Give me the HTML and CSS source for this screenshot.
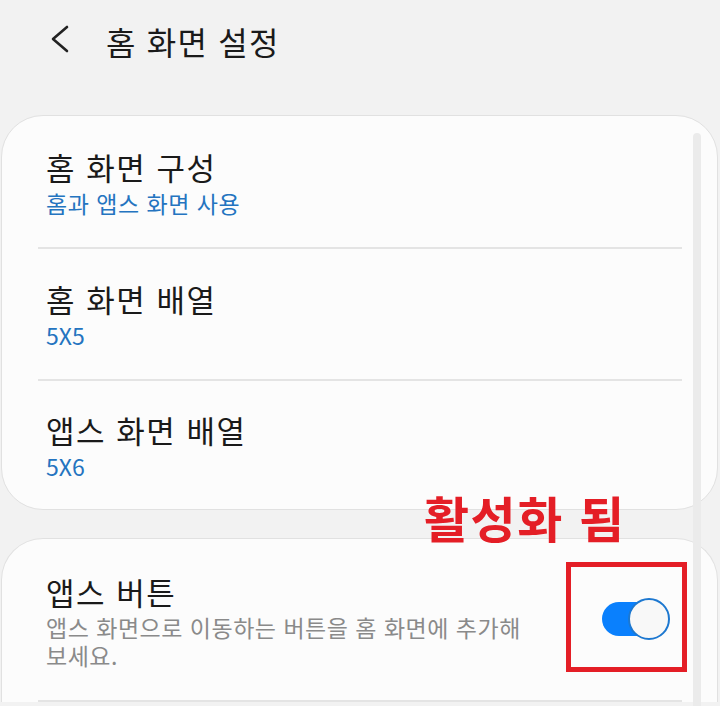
FILE: index.html
```html
<!DOCTYPE html>
<html lang="ko">
<head>
<meta charset="utf-8">
<link rel="stylesheet" href="styles.css">
</head>
<body>
<div class="screen">
  <header class="topbar">
    <svg class="back" width="20" height="30" viewBox="0 0 20 30"><path d="M17 2 L3 14 L17 26" fill="none" stroke="#222" stroke-width="2.6" stroke-linecap="round" stroke-linejoin="round"/></svg>
    <h1 class="title">홈 화면 설정</h1>
  </header>

  <section class="card">
    <div class="item item-first">
      <div class="item-title">홈 화면 구성</div>
      <div class="item-sub">홈과 앱스 화면 사용</div>
    </div>
    <div class="divider"></div>
    <div class="item">
      <div class="item-title">홈 화면 배열</div>
      <div class="item-sub latin">5X5</div>
    </div>
    <div class="divider"></div>
    <div class="item item-last">
      <div class="item-title">앱스 화면 배열</div>
      <div class="item-sub latin">5X6</div>
    </div>
  </section>

  <section class="card card2">
    <div class="switch-item">
      <div class="text-col">
        <div class="item-title">앱스 버튼</div>
        <div class="item-desc">앱스 화면으로 이동하는 버튼을 홈 화면에 추가해 보세요.</div>
      </div>
      <div class="toggle"><span class="knob"></span></div>
    </div>
    <div class="divider"></div>
  </section>

  <div class="scrollbar"></div>
  <div class="note">활성화 됨</div>
  <div class="note-box"></div>
</div>
</body>
</html>
```
FILE: styles.css
```css
html, body {
  margin: 0;
  padding: 0;
  background: #f2f2f2;
}
body {
  font-family: "Noto Sans CJK KR", "Noto Sans", sans-serif;
  color: #1c1c1c;
}
.screen {
  position: relative;
  width: 720px;
  height: 706px;
  overflow: hidden;
}
.topbar {
  display: flex;
  align-items: center;
  height: 82px;
  padding-left: 50px;
}
.back {
  display: block;
  margin-top: -2px;
}
.title {
  margin: 0 0 0 36px;
  font-size: 32px;
  font-weight: 400;
  letter-spacing: 1.2px;
  line-height: 40px;
  color: #1a1a1a;
}
.card {
  margin: 33px 2px 0 1px;
  background: #fcfcfc;
  border: 1px solid #e1e1e1;
  border-radius: 42px;
}
.card2 {
  margin-top: 28px;
  border-bottom: none;
  border-bottom-left-radius: 0;
  border-bottom-right-radius: 0;
}
.item {
  height: 130px;
  padding-left: 44px;
  display: flex;
  flex-direction: column;
  justify-content: center;
}
.item-first {
  height: 131px;
}
.item-last {
  height: 128px;
}
.item-title {
  font-size: 31px;
  letter-spacing: 1.5px;
  line-height: 42px;
  color: #1a1a1a;
}
.item-sub {
  font-size: 23px;
  letter-spacing: 0.5px;
  line-height: 30px;
  color: #2474c0;
}
.item-sub.latin {
  font-size: 23px;
  letter-spacing: 0;
}
.divider {
  height: 2px;
  background: #e4e4e4;
  margin: 0 35px 0 36px;
}
.switch-item {
  height: 161px;
  padding-left: 44px;
  padding-right: 48px;
  display: flex;
  align-items: center;
  justify-content: space-between;
}
.text-col {
  width: 500px;
  margin-top: 0;
}
.item-desc {
  font-size: 23px;
  letter-spacing: 0.5px;
  line-height: 28px;
  color: #8a8a8a;
  word-break: keep-all;
}
.toggle {
  position: relative;
  width: 67px;
  height: 34px;
  border-radius: 17px;
  background: #0a80fd;
  margin-top: -2px;
}
.knob {
  position: absolute;
  right: -1px;
  top: -4px;
  width: 38px;
  height: 38px;
  border-radius: 50%;
  background: #f8f8f8;
  border: 2px solid #1d78d0;
}
.scrollbar {
  position: absolute;
  left: 693px;
  top: 133px;
  width: 8px;
  height: 600px;
  border-radius: 4px;
  background: #ebebeb;
}
.note {
  position: absolute;
  left: 424px;
  top: 487px;
  font-size: 49px;
  font-weight: 700;
  letter-spacing: 1.5px;
  line-height: 60px;
  color: #e41e26;
}
.note-box {
  position: absolute;
  left: 566px;
  top: 562px;
  width: 111px;
  height: 100px;
  border: 5px solid #e41e26;
}
```
